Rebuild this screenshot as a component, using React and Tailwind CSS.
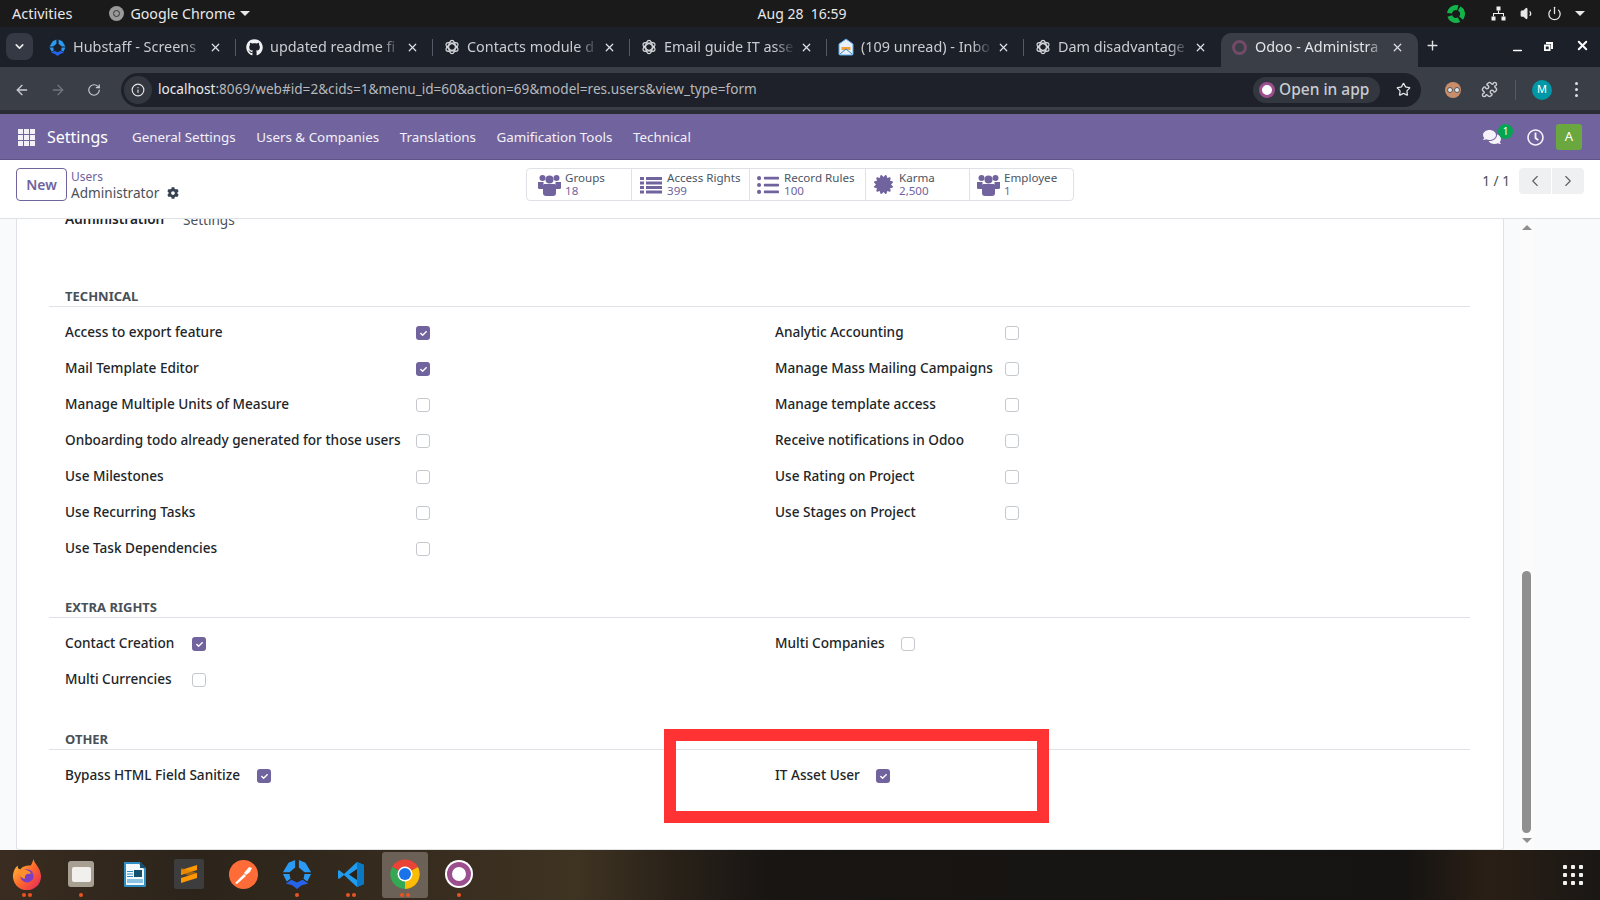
import React from 'react';
import { ArrowLeft, ArrowRight, RotateCw, Info, Star, Puzzle, X, Plus, ChevronDown, ChevronLeft, ChevronRight, Minus, Volume1, Power } from 'lucide-react';
import { FaGithub, FaListUl, FaCertificate, FaCog, FaRegClock, FaComments, FaCheck } from 'react-icons/fa';

const UI_FONT = "font-['Noto_Sans',sans-serif]";

const GptIcon = () => (
  <svg width="16" height="16" viewBox="0 0 24 24" fill="none" stroke="#d5d7da" strokeWidth="1.8">
    <ellipse cx="12" cy="12" rx="5" ry="10" />
    <ellipse cx="12" cy="12" rx="5" ry="10" transform="rotate(60 12 12)" />
    <ellipse cx="12" cy="12" rx="5" ry="10" transform="rotate(120 12 12)" />
  </svg>
);

const HubstaffIcon = ({ size = 18 }) => (
  <svg width={size} height={size} viewBox="0 0 32 32">
    <path d="M14 1 L14 9 L8 14 L1 14 L7 4 Z" fill="#2b9af3" />
    <path d="M18 1 L18 9 L24 14 L31 14 L25 4 Z" fill="#2b9af3" />
    <path d="M1 16 L8 16 L9 21 L5 24 Z" fill="#2b9af3" />
    <path d="M31 16 L24 16 L23 21 L27 24 Z" fill="#2b9af3" />
    <path d="M10 22 L16 25 L22 22 L28 26 L21 28 L16 32 L11 28 L4 26 Z" fill="#2563eb" />
  </svg>
);

const MailIcon = () => (
  <svg width="16" height="18" viewBox="0 0 16 18">
    <path d="M1 6 L8 1 L15 6 V16 a1 1 0 0 1 -1 1 H2 a1 1 0 0 1 -1 -1 Z" fill="#e8f1fb" stroke="#5aa7e8" strokeWidth="1" />
    <path d="M3.5 9 h9 v3 h-9 z" fill="#f0a23a" />
    <path d="M2 16 L8 11 L14 16" fill="none" stroke="#3b82c4" strokeWidth="1" />
  </svg>
);

const OdooRing = () => (
  <span className="w-[15px] h-[15px] rounded-full border-[3px] border-[#714b67] block" />
);

// fa-users as Odoo draws it: three heads over three stacked bodies
const UsersIcon = () => (
  <svg width="23" height="23" viewBox="0 0 23 23" fill="currentColor">
    <circle cx="4.5" cy="5" r="3" />
    <circle cx="18.5" cy="5" r="3" />
    <circle cx="11.5" cy="6.5" r="4" />
    <path d="M0 9 h5.5 v7 h-4 a1.5 1.5 0 0 1 -1.5 -1.5 Z" />
    <path d="M23 9 h-5.5 v7 h4 a1.5 1.5 0 0 0 1.5 -1.5 Z" />
    <path d="M6.5 11 h10 a1.5 1.5 0 0 1 1.5 1.5 v7.5 a3 3 0 0 1 -3 3 h-7 a3 3 0 0 1 -3 -3 v-7.5 a1.5 1.5 0 0 1 1.5 -1.5 Z" />
  </svg>
);

const ListIcon = () => (
  <svg width="22" height="18" viewBox="0 0 22 18" fill="currentColor">
    <path d="M0 1 h4 v3 h-4 z M6 1 h16 v3 h-16 z M0 5.5 h4 v3 h-4 z M6 5.5 h16 v3 h-16 z M0 10 h4 v3 h-4 z M6 10 h16 v3 h-16 z M0 14.5 h4 v3 h-4 z M6 14.5 h16 v3 h-16 z" />
  </svg>
);

const NetworkIcon = () => (
  <svg width="15" height="15" viewBox="0 0 15 15" fill="#f0f0f0" className="mr-[14px]">
    <path d="M5.5 0.5 h4 v4 h-4 z M0.5 10.5 h4 v4 h-4 z M10.5 10.5 h4 v4 h-4 z" />
    <path d="M7 4.5 h1 v2.5 h5 v3.5 h-1 v-2.5 h-9 v2.5 h-1 v-3.5 h5 z" />
  </svg>
);

const TABS = [
  { title: 'Hubstaff - Screens', icon: <HubstaffIcon size={17} /> },
  { title: 'updated readme fi', icon: <FaGithub size={17} color="#f1f2f4" /> },
  { title: 'Contacts module d', icon: <GptIcon /> },
  { title: 'Email guide IT asse', icon: <GptIcon /> },
  { title: '(109 unread) - Inbo', icon: <MailIcon /> },
  { title: 'Dam disadvantage', icon: <GptIcon /> },
  { title: 'Odoo - Administra', icon: <OdooRing />, active: true },
];

const MENU = ['General Settings', 'Users & Companies', 'Translations', 'Gamification Tools', 'Technical'];

const STATS = [
  { label: 'Groups', value: '18', icon: <UsersIcon />, width: 'w-[104px]', pad: 'pl-[11px] gap-[4px]' },
  { label: 'Access Rights', value: '399', icon: <ListIcon />, width: 'w-[118px]', pad: 'pl-[8px] gap-[5px]' },
  { label: 'Record Rules', value: '100', icon: <FaListUl size={22} />, width: 'w-[116px]', pad: 'pl-[7px] gap-[5px]' },
  { label: 'Karma', value: '2,500', icon: <FaCertificate size={19} />, width: 'w-[104px]', pad: 'pl-[8px] gap-[6px]' },
  { label: 'Employee', value: '1', icon: <UsersIcon />, width: 'w-[104px]', pad: 'pl-[7px] gap-[4px]' },
];

const SECTIONS = [
  {
    title: 'Technical',
    mt: 'mt-[57px]',
    gap: 'mb-[30px]',
    leftWidth: 'w-[351px]',
    rightWidth: 'w-[230px]',
    left: [
      ['Access to export feature', true],
      ['Mail Template Editor', true],
      ['Manage Multiple Units of Measure', false],
      ['Onboarding todo already generated for those users', false],
      ['Use Milestones', false],
      ['Use Recurring Tasks', false],
      ['Use Task Dependencies', false],
    ],
    right: [
      ['Analytic Accounting', false],
      ['Manage Mass Mailing Campaigns', false],
      ['Manage template access', false],
      ['Receive notifications in Odoo', false],
      ['Use Rating on Project', false],
      ['Use Stages on Project', false],
    ],
  },
  {
    title: 'Extra Rights',
    mt: 'mt-0',
    gap: 'mb-[31px]',
    leftWidth: 'w-[127px]',
    rightWidth: 'w-[126px]',
    left: [
      ['Contact Creation', true],
      ['Multi Currencies', false],
    ],
    right: [['Multi Companies', false]],
  },
  {
    title: 'Other',
    mt: 'mt-0',
    gap: 'mb-0',
    leftWidth: 'w-[192px]',
    rightWidth: 'w-[101px]',
    left: [['Bypass HTML Field Sanitize', true]],
    right: [['IT Asset User', true]],
  },
];

const DOCK_DOTS = [2, 1, 0, 0, 0, 1, 2, 2, 1];

const FirefoxIcon = () => (
  <svg width="30" height="32" viewBox="0 0 32 34">
    <defs>
      <linearGradient id="ffx" x1="0" y1="0" x2="1" y2="1">
        <stop offset="0" stopColor="#ffcf3a" />
        <stop offset="0.5" stopColor="#ff6a2b" />
        <stop offset="1" stopColor="#e3205f" />
      </linearGradient>
    </defs>
    <path d="M23 1 C24 7 30 9 31 19 A15 15 0 1 1 2 14 C3 11 5 9 6 8 C6 11 7 12 9 12 C12 8 17 8 20 8 C21 6 22 4 23 1 Z" fill="url(#ffx)" />
    <circle cx="16" cy="19" r="7" fill="#7b3fc4" />
    <path d="M8 14 C12 11 20 13 20 17 C16 16 13 18 14 22 C10 22 7 18 8 14 Z" fill="#ff8f2b" />
  </svg>
);

const FilesIcon = () => (
  <div className="w-[26px] h-[26px] rounded-[3px] bg-[#a79f92] flex items-center justify-center">
    <div className="w-[19px] h-[15px] rounded-[2px] bg-[#f2f0ec]" />
  </div>
);

const WriterIcon = () => (
  <svg width="24" height="27" viewBox="0 0 24 27">
    <path d="M1 1 H17 L23 7 V25 a1 1 0 0 1 -1 1 H2 a1 1 0 0 1 -1 -1 Z" fill="#2e8fc4" />
    <path d="M3 3 H16 L21 8 V24 H3 Z" fill="#f3f8fb" />
    <path d="M17 1 L23 7 H17 Z" fill="#154f70" />
    <path d="M4 10 h6 v1 h-6 z M4 12.5 h6 v1 h-6 z M4 15 h6 v1 h-6 z" fill="#2e8fc4" />
    <path d="M11 9 h8 v7 h-8 z" fill="#154f70" />
    <path d="M4 18 h16 v4 h-16 z" fill="#8cc3e4" />
  </svg>
);

const SublimeIcon = () => (
  <div className="w-[30px] h-[30px] rounded-[2px] bg-[#3d3d3d] flex items-center justify-center">
    <svg width="16" height="20" viewBox="0 0 16 20">
      <path d="M0 6 L16 1 V6 L0 11 Z" fill="#ff9800" />
      <path d="M0 9 L16 14 V9 L0 4 Z" fill="#d87c00" opacity="0.6" />
      <path d="M0 14 L16 9 V14 L0 19 Z" fill="#ff9800" />
    </svg>
  </div>
);

const PostmanIcon = () => (
  <svg width="29" height="29" viewBox="0 0 29 29">
    <circle cx="14.5" cy="14.5" r="14.5" fill="#ff6c37" />
    <path d="M6 23 L15 14 L17 16 L8 24 Z M15 13 L20 7 L23 8 L21 12 L17 15 Z" fill="#fff" />
  </svg>
);

const VsCodeIcon = () => (
  <svg width="27" height="27" viewBox="0 0 27 27">
    <path d="M19 1 L26 4 V23 L19 26 L6 14 L1 18 L0 17 V10 L1 9 L6 13 Z" fill="#1f9cf0" />
    <path d="M19 1 L26 4 V23 L19 26 V18 L13 13.5 L19 9 Z" fill="#0a78c2" />
    <path d="M19 8 L11 13.5 L19 19 Z" fill="#2a2119" />
  </svg>
);

const ChromeIcon = () => (
  <svg width="30" height="30" viewBox="0 0 30 30">
    <path d="M15 15 L2 8 A15 15 0 0 1 28 8 Z" fill="#ea4335" />
    <path d="M15 15 L28 8 A15 15 0 0 1 15 30 Z" fill="#fbbc05" />
    <path d="M15 15 L15 30 A15 15 0 0 1 2 8 Z" fill="#34a853" />
    <circle cx="15" cy="15" r="7.5" fill="#fff" />
    <circle cx="15" cy="15" r="6" fill="#1a73e8" />
  </svg>
);

const OdooDockIcon = () => (
  <div className="w-[28px] h-[28px] rounded-full bg-white flex items-center justify-center">
    <div className="w-[24px] h-[24px] rounded-full border-[5px] border-[#9c4f8f] bg-white" />
  </div>
);

const DOCK_ICONS = [
  <FirefoxIcon />,
  <FilesIcon />,
  <WriterIcon />,
  <SublimeIcon />,
  <PostmanIcon />,
  <HubstaffIcon size={30} />,
  <VsCodeIcon />,
  <ChromeIcon />,
  <OdooDockIcon />,
];

const Checkbox = ({ checked }) =>
  checked ? (
    <span className="w-[14px] h-[14px] shrink-0 rounded-[3px] bg-[#71639e] flex items-center justify-center text-white">
      <FaCheck size={7} />
    </span>
  ) : (
    <span className="w-[14px] h-[14px] shrink-0 rounded-[3px] bg-white border border-[#c5c9cd]" />
  );

const Field = ({ label, checked, labelWidth }) => (
  <div className="h-[36px] flex items-center">
    <div className={`${labelWidth} shrink-0 text-[13.6px] leading-[20px] font-medium text-[#212529] whitespace-nowrap -mt-[2px]`}>{label}</div>
    <Checkbox checked={checked} />
  </div>
);

const Section = ({ section }) => (
  <section className={`${section.mt} ${section.gap}`}>
    <h3 className="h-[20px] pl-4 text-[13px] leading-[20px] font-bold uppercase text-[#495057] border-b border-[#dee2e6] box-content">
      {section.title}
    </h3>
    <div className="flex pt-[8px] pl-4">
      <div className="w-[710px]">
        {section.left.map(([label, checked]) => (
          <Field key={label} label={label} checked={checked} labelWidth={section.leftWidth} />
        ))}
      </div>
      <div>
        {section.right.map(([label, checked]) => (
          <Field key={label} label={label} checked={checked} labelWidth={section.rightWidth} />
        ))}
      </div>
    </div>
  </section>
);

const App = () => {
  return (
    <div className={`relative w-[1600px] h-[900px] overflow-hidden flex flex-col bg-[#f9fafb] ${UI_FONT}`}>
      {/* Ubuntu top bar */}
      <div className="h-[27px] shrink-0 bg-[#1a1a1a] text-[#e8e8e8] text-[14.5px] flex items-center">
        <span className="ml-[12px]">Activities</span>
        <span className="ml-[37px] w-[15px] h-[15px] rounded-full bg-[#9a9a9a] flex items-center justify-center">
          <span className="w-[7px] h-[7px] rounded-full border border-[#333]" />
        </span>
        <span className="ml-[6px] text-[14.2px]">Google Chrome</span>
        <span className="ml-[5px] w-0 h-0 border-x-[5px] border-x-transparent border-t-[5px] border-t-[#e8e8e8]" />
        <span className="flex-1 text-center text-[14px] mr-[92px]">Aug 28&nbsp;&nbsp;16:59</span>
        <span className="mr-[25px]">
          <svg width="20" height="20" viewBox="0 0 20 20" fill="none">
            <circle cx="10" cy="10" r="6.5" stroke="#12b34a" strokeWidth="5" strokeDasharray="11 2.6" transform="rotate(-60 10 10)" />
          </svg>
        </span>
        <NetworkIcon />
        <Volume1 size={15} fill="#e8e8e8" className="mr-[12px]" />
        <Power size={15} className="mr-[13px]" />
        <span className="mr-[15px] w-0 h-0 border-x-[5px] border-x-transparent border-t-[5px] border-t-[#e8e8e8]" />
      </div>

      {/* Chrome tab strip */}
      <div className="h-[40px] shrink-0 bg-[#1c2029] flex items-end text-[#c9ccd1] text-[14.4px]">
        <div className="ml-[6px] mb-[7px] w-[27px] h-[27px] rounded-[8px] bg-[#353944] flex items-center justify-center">
          <ChevronDown size={13} strokeWidth={3} color="#e8eaed" />
        </div>
        <div className="ml-[6px] flex items-end">
          {TABS.map((tab, i) => (
            <div
              key={tab.title}
              className={
                tab.active
                  ? 'w-[197px] h-[34px] pb-[6px] pl-[10px] pr-[8px] rounded-t-[10px] bg-[#3a3e47] flex items-center text-[#e3e5e8]'
                  : 'w-[197px] h-[34px] pb-[6px] pl-[10px] pr-[8px] flex items-center relative'
              }
            >
              <span className="w-[17px] shrink-0 flex justify-center">{tab.icon}</span>
              <span className="ml-[7px] flex-1 overflow-hidden whitespace-nowrap [mask-image:linear-gradient(to_right,black_85%,transparent)]">{tab.title}</span>
              <X size={13} strokeWidth={2.2} color="#dfe1e5" className="ml-[5px] mr-[6px] shrink-0" />
              {!tab.active && i < 5 && <span className="absolute right-0 top-[6px] w-px h-[17px] bg-[#555a64]" />}
            </div>
          ))}
        </div>
        <Plus size={15} strokeWidth={2.2} color="#dfe1e5" className="ml-[7px] mb-[14px]" />
        <Minus size={13} strokeWidth={3} color="#fff" className="ml-[71px] mb-[10px]" />
        <svg width="11" height="11" viewBox="0 0 11 11" className="ml-[19px] mb-[15px]">
          <path d="M3 1 H10 V8 H8 V3 H3 Z M1 3.5 H7.5 V10 H1 Z M2.8 5.5 V8.2 H5.7 V5.5 Z" fill="#fff" fillRule="evenodd" />
        </svg>
        <X size={15} strokeWidth={3} color="#fff" className="ml-[21px] mb-[14px]" />
      </div>

      {/* Chrome toolbar */}
      <div className="h-[43px] shrink-0 pt-[2px] bg-[#3a3e47] flex items-center text-[#c9ccd1]">
        <ArrowLeft size={16} className="ml-[14px] shrink-0" />
        <ArrowRight size={16} className="ml-[20px] text-[#71757d] shrink-0" />
        <RotateCw size={14} className="ml-[21px] shrink-0" />
        <div className="ml-[20px] w-[1300px] shrink-0 h-[34px] rounded-full bg-[#1e2129] flex items-center">
          <span className="ml-[3px] w-[28px] h-[28px] rounded-full bg-[#33373f] flex items-center justify-center">
            <Info size={14} color="#e3e5e8" />
          </span>
          <span className="ml-[6px] text-[13.6px] text-[#e8eaed] flex-1">
            localhost<span className="text-[#b5b8bd]">:8069/web#id=2&amp;cids=1&amp;menu_id=60&amp;action=69&amp;model=res.users&amp;view_type=form</span>
          </span>
          <span className="h-[26px] w-[127px] rounded-full bg-[#33373f] flex items-center pl-[6px] gap-[4px] text-[15.5px] font-medium text-[#c8ccd2]">
            <span className="w-[16px] h-[16px] rounded-full bg-white border-[3px] border-[#9c4f8f]" />
            Open in app
          </span>
          <Star size={15} color="#e3e5e8" className="ml-[16px] mr-[10px]" />
        </div>
        <span className="ml-[24px] w-[16px] h-[16px] rounded-full bg-[#c98d6a] flex items-center justify-center gap-[1px]">
          <span className="w-[6px] h-[6px] rounded-full bg-[#dfe7ea] border border-[#555]" />
          <span className="w-[6px] h-[6px] rounded-full bg-[#dfe7ea] border border-[#555]" />
        </span>
        <Puzzle size={17} className="ml-[20px]" />
        <span className="ml-[17px] w-px h-[20px] bg-[#555a64]" />
        <span className="ml-[16px] w-[20px] h-[20px] rounded-full bg-[#0097a7] text-white text-[11px] flex items-center justify-center">M</span>
        <span className="ml-[23px] flex flex-col gap-[3px]">
          <span className="w-[3px] h-[3px] rounded-full bg-[#dfe1e5]" />
          <span className="w-[3px] h-[3px] rounded-full bg-[#dfe1e5]" />
          <span className="w-[3px] h-[3px] rounded-full bg-[#dfe1e5]" />
        </span>
      </div>

      {/* Page top gap between browser chrome and Odoo */}
      <div className="h-[4px] shrink-0 bg-[#2a2d34]" />

      {/* Odoo navbar */}
      <nav className="h-[46px] shrink-0 pt-[1px] bg-[#71639e] text-white flex items-center border-b border-[#5f5287]">
        <div className="ml-[18px] w-[17px] h-[17px] grid grid-cols-3 gap-[1px]">
          {Array.from({ length: 9 }).map((_, i) => (
            <span key={i} className="bg-[#f3f1f7]" />
          ))}
        </div>
        <span className="ml-[12px] text-[16px]">Settings</span>
        <div className="ml-[24px] flex gap-[20.5px] text-[13.4px] text-[#f3f1f7]">
          {MENU.map((item) => (
            <span key={item}>{item}</span>
          ))}
        </div>
        <div className="ml-auto flex items-center">
          <span className="relative">
            <FaComments size={18} color="#f4f2f8" />
            <span className="absolute -top-[4px] left-[15px] w-[15px] h-[15px] rounded-full bg-[#00a651] text-[10px] flex items-center justify-center">1</span>
          </span>
          <FaRegClock size={17} color="#f4f2f8" className="ml-[26px]" />
          <span className="ml-[12px] mr-[18px] w-[26px] h-[26px] rounded-[3px] bg-[#6aa83f] text-[13px] flex items-center justify-center">A</span>
        </div>
      </nav>

      {/* Control panel */}
      <div className="h-[59px] shrink-0 bg-white border-b border-[#dee2e6] flex items-start pt-[8px] text-[#495057]">
        <button className="ml-[16px] w-[51px] h-[33px] shrink-0 rounded-[4px] border border-[#71639e] text-[#71639e] text-[14px] font-semibold">New</button>
        <div className="ml-[4px] w-[115px] shrink-0 pt-[1px] leading-none">
          <div className="text-[12px] text-[#71639e] leading-[15px]">Users</div>
          <div className="text-[13.6px] leading-[18px] flex items-center gap-[8px]">
            Administrator <FaCog size={12} color="#374151" />
          </div>
        </div>
        <div className="ml-[340px] h-[33px] shrink-0 flex rounded-[4px] border border-[#dee2e6]">
          {STATS.map((stat, i) => (
            <div key={stat.label} className={`${stat.width} ${stat.pad} flex items-center ${i > 0 ? 'border-l border-[#dee2e6]' : ''}`}>
              <span className="text-[#71639e] shrink-0">{stat.icon}</span>
              <span className="text-[11.6px] leading-[13px] -mt-[1px] text-[#4b5563] whitespace-nowrap">
                {stat.label}
                <br />
                <span className="text-[#71639e]">{stat.value}</span>
              </span>
            </div>
          ))}
        </div>
        <span className="ml-auto mt-[4px] text-[13.6px] leading-[18px] whitespace-nowrap">1 / 1</span>
        <div className="ml-[9px] mr-[16px] flex gap-px h-[26px] shrink-0 text-[#5b6067]">
          <span className="w-[32px] rounded-l-[4px] bg-[#eef0f2] flex items-center justify-center"><ChevronLeft size={18} strokeWidth={1.5} /></span>
          <span className="w-[32px] rounded-r-[4px] bg-[#eef0f2] flex items-center justify-center"><ChevronRight size={18} strokeWidth={1.5} /></span>
        </div>
      </div>

      {/* Form */}
      <div className="flex-1 min-h-0 flex">
        <div className="ml-4 w-[1488px] bg-white border-x border-b border-[#dee2e6] rounded-b-[3px] overflow-hidden pl-[32px] pr-[33px]">
          <div className="-mt-[10px] h-[20px] pl-4 flex items-center text-[13.6px] text-[#212529]">
            <span className="w-[118px] font-semibold">Administration</span>
            <span className="text-[#495057] mt-[2px]">Settings</span>
          </div>
          {SECTIONS.map((section) => (
            <Section key={section.title} section={section} />
          ))}
        </div>
        <div className="ml-[15px] w-[15px] bg-[#fbfbfb] flex flex-col items-center pt-[6px]">
          <span className="w-0 h-0 border-x-[5px] border-x-transparent border-b-[5px] border-b-[#8f8f8f]" />
          <span className="w-[9px] h-[262px] rounded-full bg-[#8f8f8f] mt-[341px]" />
          <span className="mt-[5px] w-0 h-0 border-x-[5px] border-x-transparent border-t-[5px] border-t-[#8f8f8f]" />
        </div>
      </div>

      {/* Ubuntu dock */}
      <div className="h-[50px] shrink-0 flex items-center bg-[linear-gradient(90deg,#3a2c20_0%,#2c241b_12%,#33291d_22%,#3f3322_36%,#2a2219_42%,#181513_48%,#161412_88%,#2a1f15_93%,#1a1715_100%)]">
        {DOCK_ICONS.map((icon, i) => (
          <div key={i} className="w-[54px] h-[50px] flex items-center justify-center">
            <div className={`w-[46px] h-[46px] flex flex-col items-center justify-end rounded-[3px] ${i === 7 ? 'bg-[#6b6156]' : ''}`}>
              <div className="h-[36px] flex items-center justify-center">{icon}</div>
              <div className="h-[4px] mt-[1px] mb-[1px] flex gap-[2px]">
                {Array.from({ length: DOCK_DOTS[i] }).map((_, d) => (
                  <span key={d} className="w-[4px] h-[4px] rounded-full bg-[#e95420]" />
                ))}
              </div>
            </div>
          </div>
        ))}
        <div className="ml-auto mr-[17px] w-[20px] h-[20px] grid grid-cols-3 gap-[4px]">
          {Array.from({ length: 9 }).map((_, i) => (
            <span key={i} className="rounded-[1px] bg-[#f2f2f2]" />
          ))}
        </div>
      </div>

      {/* Red annotation drawn over the screenshot */}
      <div className="absolute left-[664px] top-[729px] w-[385px] h-[94px] border-[12px] border-[#ff3333]" />
    </div>
  );
};

export default App;
